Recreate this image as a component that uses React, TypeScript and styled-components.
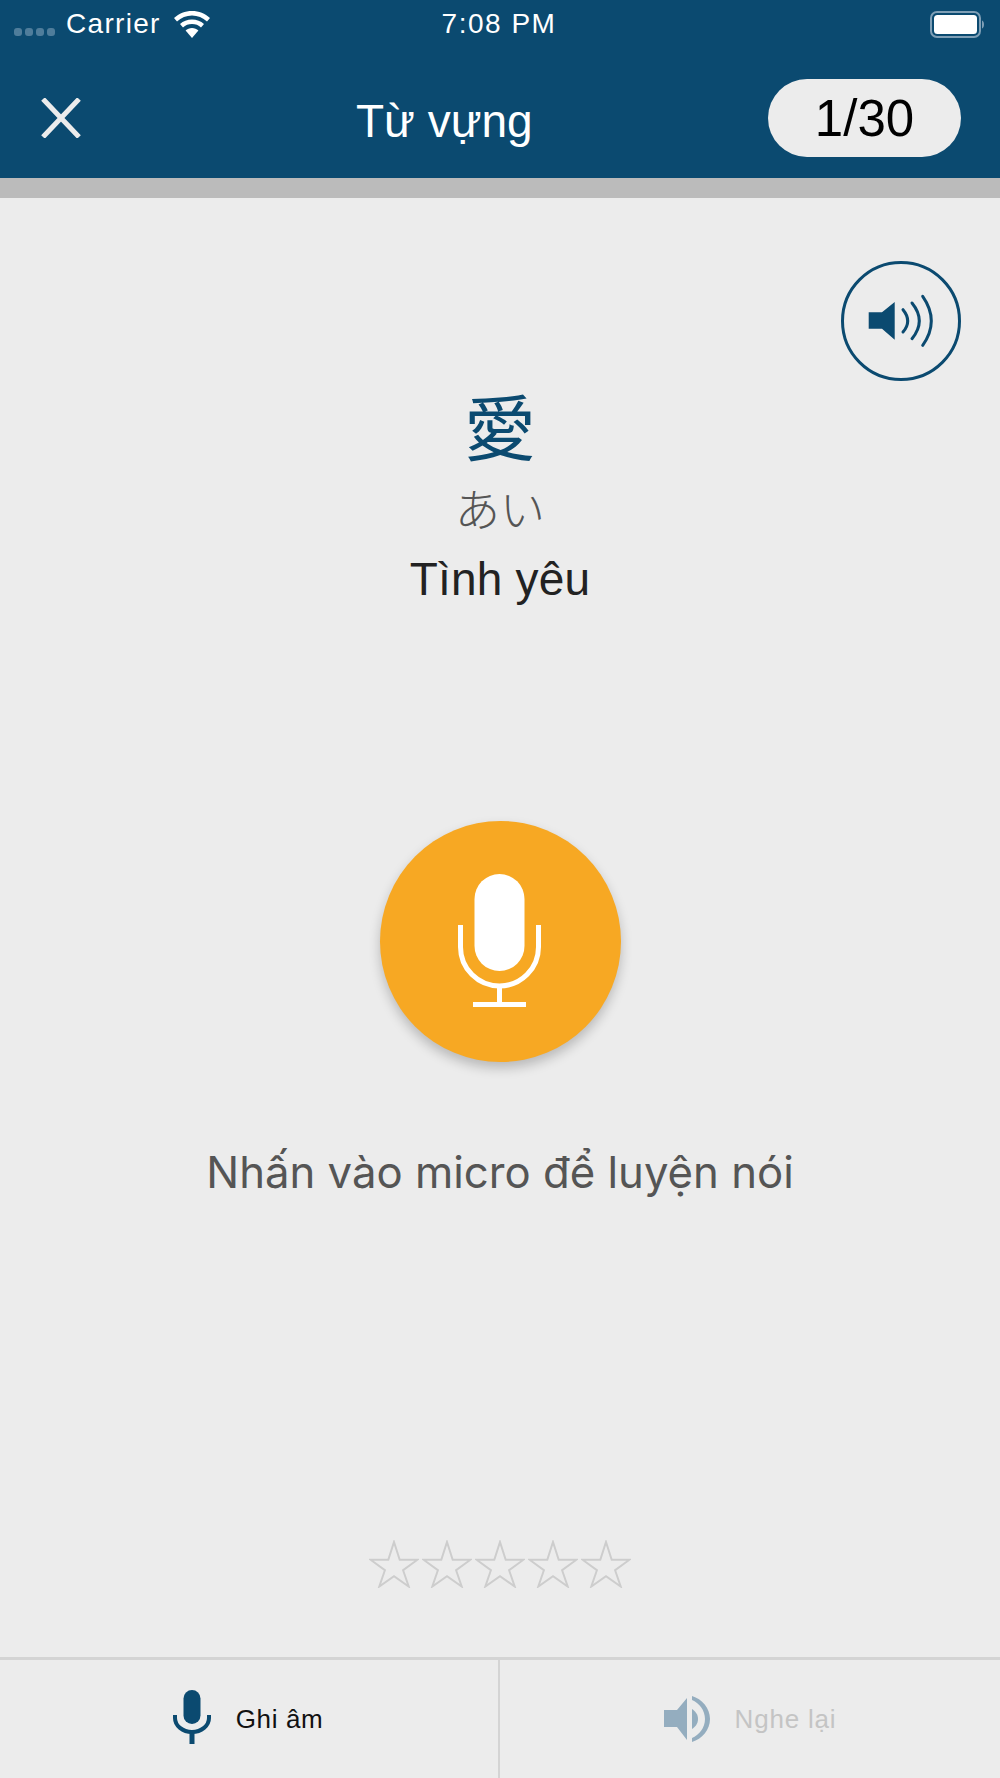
import React from 'react';
import styled, { createGlobalStyle } from 'styled-components';

const GlobalStyle = createGlobalStyle`
  html, body {
    margin: 0;
    padding: 0;
    background: #ececec;
  }
  * {
    box-sizing: border-box;
  }
`;

const Screen = styled.div`
  width: 1000px;
  height: 1778px;
  display: flex;
  flex-direction: column;
  background: #ececec;
  font-family: 'Liberation Sans', Arial, sans-serif;
  overflow: hidden;
`;

const Header = styled.header`
  height: 178px;
  background: #0b4a70;
  display: flex;
  flex-direction: column;
`;

const StatusBar = styled.div`
  height: 50px;
  padding: 0 16px 2px 14px;
  display: grid;
  grid-template-columns: 1fr auto 1fr;
  align-items: center;
  color: #fff;
  font-size: 28px;
`;

const StatusLeft = styled.div`
  display: flex;
  align-items: center;
`;

const SignalDots = styled.div`
  display: flex;
  gap: 3px;
  margin: 15px 11px 0 0;
`;

const SignalDot = styled.span`
  width: 8px;
  height: 8px;
  border-radius: 3px;
  background: #4f7d9b;
`;

const Carrier = styled.span`
  margin-right: 13px;
  letter-spacing: 1.3px;
`;

const StatusTime = styled.span`
  letter-spacing: 1.5px;
`;

const StatusRight = styled.div`
  display: flex;
  justify-content: flex-end;
`;

const NavBar = styled.div`
  flex: 1;
  padding: 8px 39px 0 41px;
  display: grid;
  grid-template-columns: 315px auto 1fr;
  align-items: center;
`;

const CloseButton = styled.button`
  width: 40px;
  height: 40px;
  padding: 0;
  border: none;
  background: none;
  display: block;
`;

const Title = styled.h1`
  margin: 0;
  color: #fff;
  font-size: 46px;
  font-weight: 400;
  line-height: 1;
  position: relative;
  top: 3px;
`;

const Counter = styled.div`
  justify-self: end;
  width: 193px;
  height: 78px;
  border-radius: 39px;
  background: #ececec;
  color: #000;
  font-size: 51px;
  display: flex;
  align-items: center;
  justify-content: center;
`;

const ProgressTrack = styled.div`
  height: 20px;
  background: #bbbbbb;
`;

const Content = styled.main`
  flex: 1;
  display: flex;
  flex-direction: column;
  align-items: center;
`;

const ListenButton = styled.button`
  align-self: flex-end;
  width: 120px;
  height: 120px;
  margin: 63px 39px 0 0;
  padding: 0;
  border: 3px solid #0b4a70;
  border-radius: 50%;
  background: none;
  display: flex;
  align-items: center;
  justify-content: center;
`;

const Kanji = styled.div`
  margin-top: 4px;
  height: 78px;
  color: #0b4a70;
  font-family: 'Noto Sans CJK TC', 'Liberation Sans', sans-serif;
  font-size: 72px;
  line-height: 78px;
`;

const Reading = styled.div`
  margin-top: 20px;
  height: 50px;
  color: #555;
  font-family: 'Noto Sans CJK JP', sans-serif;
  font-size: 45px;
  font-weight: 300;
  line-height: 50px;
`;

const Meaning = styled.div`
  margin-top: 19px;
  height: 54px;
  color: #222;
  font-size: 46px;
  letter-spacing: 0.2px;
  line-height: 54px;
`;

const RecordButton = styled.button`
  width: 241px;
  height: 241px;
  margin-top: 215px;
  padding: 0 2px 0 0;
  border: none;
  border-radius: 50%;
  background: #f7a823;
  box-shadow: 0 6px 12px rgba(0, 0, 0, 0.22);
  display: flex;
  align-items: center;
  justify-content: center;
`;

const Hint = styled.p`
  margin: 83px 0 0;
  color: #555;
  font-family: Inter, 'Liberation Sans', sans-serif;
  font-size: 43.7px;
  line-height: 56px;
`;

const Stars = styled.div`
  margin-top: auto;
  margin-bottom: 69px;
  display: flex;
  gap: 3px;
`;

const BottomBar = styled.footer`
  height: 121px;
  border-top: 3px solid #d4d4d4;
  display: grid;
  grid-template-columns: 498px 1fr;
`;

const BarItem = styled.button<{ $divided?: boolean }>`
  padding: 0 ${p => (p.$divided ? 0 : 2)}px 0 0;
  border: none;
  border-left: ${p => (p.$divided ? '2px solid #d4d4d4' : 'none')};
  background: none;
  display: flex;
  align-items: center;
  justify-content: center;
  gap: 25px;
  font-family: inherit;
`;

const BarLabel = styled.span<{ $muted?: boolean }>`
  color: ${p => (p.$muted ? '#c4c4c4' : '#111')};
  font-size: 26px;
  letter-spacing: ${p => (p.$muted ? 0.8 : 0.6)}px;
`;

const SmallMicSvg = styled.svg`
  margin-bottom: 4px;
`;

const WifiIcon = () => (
  <svg width="36" height="27" viewBox="0 0 36 27" fill="#fff">
    <path d="M18 0C11 0 5 2.600 0 7l3 3.400C7.200 6.800 12.400 4.600 18 4.600s10.800 2.200 15 5.800l3-3.400C31 2.600 25 0 18 0z" />
    <path d="M18 8.500c-4.700 0-8.800 1.700-12 4.500l3 3.400c2.400-2.100 5.500-3.300 9-3.300s6.600 1.200 9 3.300l3-3.400c-3.200-2.800-7.300-4.500-12-4.500z" />
    <path d="M18 17c-2.500 0-4.700.900-6.400 2.400L18 27l6.400-7.600C22.700 17.900 20.500 17 18 17z" />
  </svg>
);

const BatteryIcon = () => (
  <svg width="54" height="27" viewBox="0 0 54 27">
    <rect x="1" y="1" width="49" height="25" rx="6" fill="none" stroke="#7f9fb6" strokeWidth="2" />
    <rect x="4" y="4" width="43" height="19" rx="3.500" fill="#fff" />
    <path d="M52 9.500c1.300.400 2 2 2 4s-.700 3.600-2 4z" fill="#7f9fb6" />
  </svg>
);

const CloseIcon = () => (
  <svg width="40" height="40" viewBox="0 0 40 40">
    <path d="M2 1l36 38M38 1L2 39" stroke="#ececec" strokeWidth="5" fill="none" />
  </svg>
);

const ListenIcon = () => (
  <svg width="114" height="114" viewBox="3 2 114 114" fill="none">
    <path d="M27.700 50.300H41L53.700 40v37.700L41 66.700H27.700z" fill="#0b4a70" />
    <g stroke="#0b4a70" strokeWidth="3" strokeLinecap="round">
      <path d="M62 47.700Q71.400 59 62 70" />
      <path d="M71 41Q85.600 59 71 76.700" />
      <path d="M81.700 34.300Q98.900 59 81.700 83.300" />
    </g>
  </svg>
);

const BigMicIcon = () => (
  <svg width="83" height="135" viewBox="0 0 83 135" fill="none">
    <rect x="16.500" y="0" width="50" height="97" rx="25" fill="#fff" />
    <path d="M2.500 51v22a39 39 0 0 0 78 0V51" stroke="#fff" strokeWidth="5" />
    <path d="M41.500 113v20" stroke="#fff" strokeWidth="5" />
    <path d="M15 130.500h53" stroke="#fff" strokeWidth="5" />
  </svg>
);

const StarIcon = () => (
  <svg width="50" height="48" viewBox="0 0 50 48">
    <path
      d="M25 2l5.700 17.700H48.500L34.100 30.200 39.700 46.500 25 36.200 10.300 46.500l5.600-16.300L1.500 19.700h17.800z"
      fill="none"
      stroke="#cdcdcd"
      strokeWidth="2"
    />
  </svg>
);

const SmallMicIcon = () => (
  <SmallMicSvg width="38" height="54" viewBox="0 0 38 54" fill="none">
    <rect x="10.500" y="0" width="17" height="34" rx="8.500" fill="#0b4a70" />
    <path d="M2 25v3a17 14 0 0 0 34 0v-3" stroke="#0b4a70" strokeWidth="4" />
    <path d="M19 40v14" stroke="#0b4a70" strokeWidth="5" />
  </SmallMicSvg>
);

const ReplayIcon = () => (
  <svg width="46" height="46" viewBox="0 0 46 46" fill="#94adbf">
    <path d="M0 14h13L23 2v42L13 31H0z" />
    <path d="M28 0c10 3 18 12 18 23s-8 20-18 23v-4c7-3 13-10 13-19S35 7 28 4z" />
    <path d="M28 13c3 2 6 5 6 10s-3 8-6 10z" />
  </svg>
);

const App: React.FC = () => {
  return (
    <Screen>
      <GlobalStyle />
      <Header>
        <StatusBar>
          <StatusLeft>
            <SignalDots>
              <SignalDot />
              <SignalDot />
              <SignalDot />
              <SignalDot />
            </SignalDots>
            <Carrier>Carrier</Carrier>
            <WifiIcon />
          </StatusLeft>
          <StatusTime>7:08 PM</StatusTime>
          <StatusRight>
            <BatteryIcon />
          </StatusRight>
        </StatusBar>
        <NavBar>
          <CloseButton>
            <CloseIcon />
          </CloseButton>
          <Title>Từ vựng</Title>
          <Counter>1/30</Counter>
        </NavBar>
      </Header>
      <ProgressTrack />
      <Content>
        <ListenButton>
          <ListenIcon />
        </ListenButton>
        <Kanji>愛</Kanji>
        <Reading>あい</Reading>
        <Meaning>Tình yêu</Meaning>
        <RecordButton>
          <BigMicIcon />
        </RecordButton>
        <Hint>Nhấn vào micro để luyện nói</Hint>
        <Stars>
          {[0, 1, 2, 3, 4].map(i => (
            <StarIcon key={i} />
          ))}
        </Stars>
      </Content>
      <BottomBar>
        <BarItem>
          <SmallMicIcon />
          <BarLabel>Ghi âm</BarLabel>
        </BarItem>
        <BarItem $divided>
          <ReplayIcon />
          <BarLabel $muted>Nghe lại</BarLabel>
        </BarItem>
      </BottomBar>
    </Screen>
  );
};

export default App;
